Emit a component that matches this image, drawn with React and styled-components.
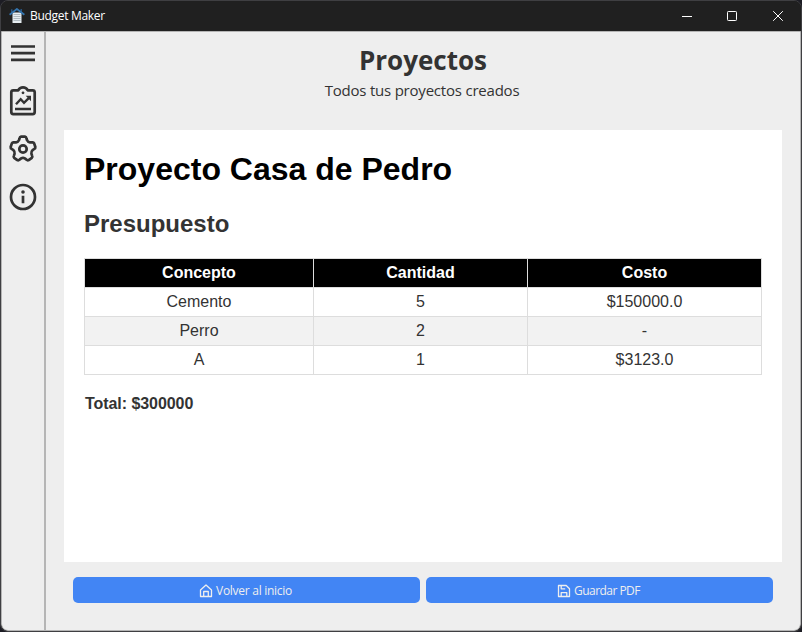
import React from "react";
import styled, { createGlobalStyle } from "styled-components";

const GlobalStyle = createGlobalStyle`
  * { box-sizing: border-box; }
  html, body { margin: 0; padding: 0; background: #1d1d24; overflow: hidden; }
`;

const Window = styled.div`
  width: 802px;
  height: 632px;
  display: flex;
  flex-direction: column;
  overflow: hidden;
  border: 1px solid #3f3f42;
  border-radius: 8px;
  background: #202020;
  color: #333;
  font-family: "Open Sans", "Noto Sans", sans-serif;
`;

const TitleBar = styled.header`
  height: 30px;
  flex: none;
  display: flex;
  align-items: center;
  padding-left: 8px;
  background: #202020;
  color: #fff;
`;

const AppIcon = styled.svg`
  width: 16px;
  height: 16px;
  margin-right: 5px;
`;

const WindowTitle = styled.span`
  flex: 1;
  font-size: 12px;
  line-height: 16px;
  letter-spacing: -0.3px;
`;

const WindowControl = styled.span`
  width: ${(p) => p.$width || 45}px;
  height: 29px;
  display: flex;
  align-items: center;
  justify-content: center;
`;

const Body = styled.div`
  flex: 1;
  display: flex;
  min-height: 0;
  overflow: hidden;
  border: 1px solid #b4b4b4;
  border-radius: 0 0 7px 7px;
  background: #eee;
`;

const Sidebar = styled.nav`
  width: 44px;
  flex: none;
  display: flex;
  flex-direction: column;
  align-items: center;
  border-right: 2px solid #b5b5b5;
  padding-top: 5px;
  gap: 16px;
`;

const SideIcon = styled.svg`
  width: 32px;
  height: 32px;
  flex: none;
  fill: none;
  stroke: #333;
  stroke-width: 2.7;
  stroke-linecap: ${(p) => p.$cap || "round"};
  stroke-linejoin: round;
`;

const Main = styled.main`
  flex: 1;
  display: flex;
  flex-direction: column;
  padding: 10px 18px 27px;
`;

const Heading = styled.div`
  height: 88px;
  text-align: center;
`;

const PageTitle = styled.h1`
  margin: 0;
  font-size: 26px;
  font-weight: 700;
  line-height: 36px;
`;

const Subtitle = styled.p`
  margin: 1px 0 0;
  padding-right: 2px;
  font-size: 15px;
  line-height: 22px;
  letter-spacing: -0.21px;
`;

const Sheet = styled.section`
  height: 432px;
  padding: 21px 20px 20px;
  background: #fff;
  font-family: "Liberation Sans", Arial, sans-serif;
`;

const ProjectTitle = styled.h2`
  margin: 0;
  color: #000;
  font-size: 32px;
  line-height: 37px;
`;

const SectionTitle = styled.h3`
  margin: 22px 0 20px;
  font-size: 24px;
  line-height: 28px;
`;

const Table = styled.table`
  width: 678px;
  table-layout: fixed;
  border-collapse: collapse;
  font-size: 16px;
  line-height: 18px;
  text-align: center;

  tbody tr:nth-child(even) { background: #f2f2f2; }
`;

const Col = styled.col`
  width: ${(p) => p.$width}px;
`;

const HeadCell = styled.th`
  padding: 5px;
  border: 1px solid #ddd;
  background: #000;
  color: #fff;
`;

const Cell = styled.td`
  padding: 5px;
  border: 1px solid #ddd;
`;

const Total = styled.p`
  margin: 20px 0 0 1px;
  font-size: 16px;
  font-weight: 700;
  line-height: 18px;
  letter-spacing: -0.06px;
`;

const Actions = styled.div`
  display: flex;
  gap: 6px;
  padding: 15px 9px 0;
`;

const Button = styled.button`
  flex: 1;
  height: 26px;
  display: flex;
  align-items: center;
  justify-content: center;
  gap: 3px;
  padding: 1px 2px 0 0;
  border: 0;
  border-radius: 5px;
  background: #4285f4;
  color: #eee;
  font-family: inherit;
  font-size: 12px;
  line-height: 18px;
  letter-spacing: ${(p) => p.$spacing}px;

  svg {
    width: 14px;
    height: 14px;
    fill: none;
    stroke: currentColor;
    stroke-width: 1.3;
    stroke-linejoin: round;
  }
`;

const polar = (degrees, radius) => {
  const angle = (degrees * Math.PI) / 180;
  return `${(16 + radius * Math.cos(angle)).toFixed(2)} ${(16 + radius * Math.sin(angle)).toFixed(2)}`;
};

const gearPath =
  [0, 1, 2, 3, 4]
    .map((tooth) => {
      const a = -90 + tooth * 72;
      return [
        `${tooth ? "L" : "M"}${polar(a - 25, 9.6)}`,
        `L${polar(a - 18, 11.2)}`,
        `Q${polar(a - 15, 12.6)} ${polar(a - 9, 12.5)}`,
        `L${polar(a + 9, 12.5)}`,
        `Q${polar(a + 15, 12.6)} ${polar(a + 18, 11.2)}`,
        `L${polar(a + 25, 9.6)}`,
        `Q${polar(a + 36, 8.4)} ${polar(a + 47, 9.6)}`,
      ].join("");
    })
    .join("") + "Z";

const rows = [
  ["Cemento", "5", "$150000.0"],
  ["Perro", "2", "-"],
  ["A", "1", "$3123.0"],
];

export default function App() {
  return (
    <>
      <GlobalStyle />
      <Window>
        <TitleBar>
          <AppIcon viewBox="0 0 16 16">
            <path d="M3.500 4.500h9V15h-9z" fill="#e6edf1" />
            <path d="M12.200 1v3.500M2.800 1.200v3" stroke="#285e91" strokeWidth="1.300" />
            <path d="M.6 6.800 7.900 1l7.500 5.800" fill="none" stroke="#3474ad" strokeWidth="1.800" />
            <path d="M4.500 6.500h7M4.500 8.500h7M4.500 10.500h7M4.500 12.500h7" stroke="#9aa6ae" strokeWidth="0.7" />
          </AppIcon>
          <WindowTitle>Budget Maker</WindowTitle>
          <WindowControl $width={44}>
            <svg width="10" height="10" stroke="#fff"><path d="M0 5.5h10" /></svg>
          </WindowControl>
          <WindowControl $width={46}>
            <svg width="10" height="10" fill="none" stroke="#fff"><rect x="0.5" y="0.5" width="9" height="9" rx="0.8" /></svg>
          </WindowControl>
          <WindowControl $width={46}>
            <svg width="10" height="10" stroke="#fff"><path d="m.2.2 9.6 9.6m0-9.6L.2 9.8" /></svg>
          </WindowControl>
        </TitleBar>
        <Body>
          <Sidebar>
            <SideIcon $cap="butt" viewBox="0 0 32 32">
              <path d="M4 9.500h24M4 16.200h24M4 22.800h24" />
            </SideIcon>
            <SideIcon viewBox="0 0 32 32">
              <path d="M11.200 5.300H6.300Q4.300 5.300 4.300 7.300v19.800q0 2 2 2h19.400q2 0 2-2V7.300q0-2-2-2h-4.900Q19.300 2.400 16 2.400t-4.800 2.900Z" />
              <path d="M9 19.300l4.700-5 3.300 3.500 5.500-5.400" strokeWidth="2.400" strokeLinecap="butt" strokeLinejoin="miter" />
              <path d="M18.700 10.800H24v5.400z" fill="#333" stroke="none" />
              <path d="M8 24h16" strokeWidth="2.300" strokeLinecap="butt" />
              <circle cx="16" cy="7.800" r="1.400" fill="#333" stroke="none" />
            </SideIcon>
            <SideIcon viewBox="0 0 32 32">
              <path d={gearPath} />
              <circle cx="16" cy="16" r="3.700" />
            </SideIcon>
            <SideIcon viewBox="0 0 32 32">
              <circle cx="16" cy="16" r="12" />
              <path d="M16 14.800v7.500" strokeLinecap="butt" />
              <circle cx="16" cy="11" r="1.800" fill="#333" stroke="none" />
            </SideIcon>
          </Sidebar>
          <Main>
            <Heading>
              <PageTitle>Proyectos</PageTitle>
              <Subtitle>Todos tus proyectos creados</Subtitle>
            </Heading>
            <Sheet>
              <ProjectTitle>Proyecto Casa de Pedro</ProjectTitle>
              <SectionTitle>Presupuesto</SectionTitle>
              <Table>
                <colgroup>
                  <Col $width={229} /><Col $width={214} /><Col $width={234} />
                </colgroup>
                <thead>
                  <tr>
                    <HeadCell>Concepto</HeadCell>
                    <HeadCell>Cantidad</HeadCell>
                    <HeadCell>Costo</HeadCell>
                  </tr>
                </thead>
                <tbody>
                  {rows.map((row) => (
                    <tr key={row[0]}>
                      {row.map((value) => <Cell key={value}>{value}</Cell>)}
                    </tr>
                  ))}
                </tbody>
              </Table>
              <Total>Total: $300000</Total>
            </Sheet>
            <Actions>
              <Button $spacing={-0.28}>
                <svg viewBox="0 0 14 14">
                  <path d="M1.500 6 7 1l5.500 5v6.500h-11zM4.700 12.500V7.500h4.600v5" />
                </svg>
                Volver al inicio
              </Button>
              <Button $spacing={-0.54}>
                <svg viewBox="0 0 14 14">
                  <path d="M1.500 1.500h7.700l3.300 3.300v7.700h-11zM4.200 1.500v3.300h4M4.200 12.500V8.700h5.600v3.800" />
                </svg>
                Guardar PDF
              </Button>
            </Actions>
          </Main>
        </Body>
      </Window>
    </>
  );
}
